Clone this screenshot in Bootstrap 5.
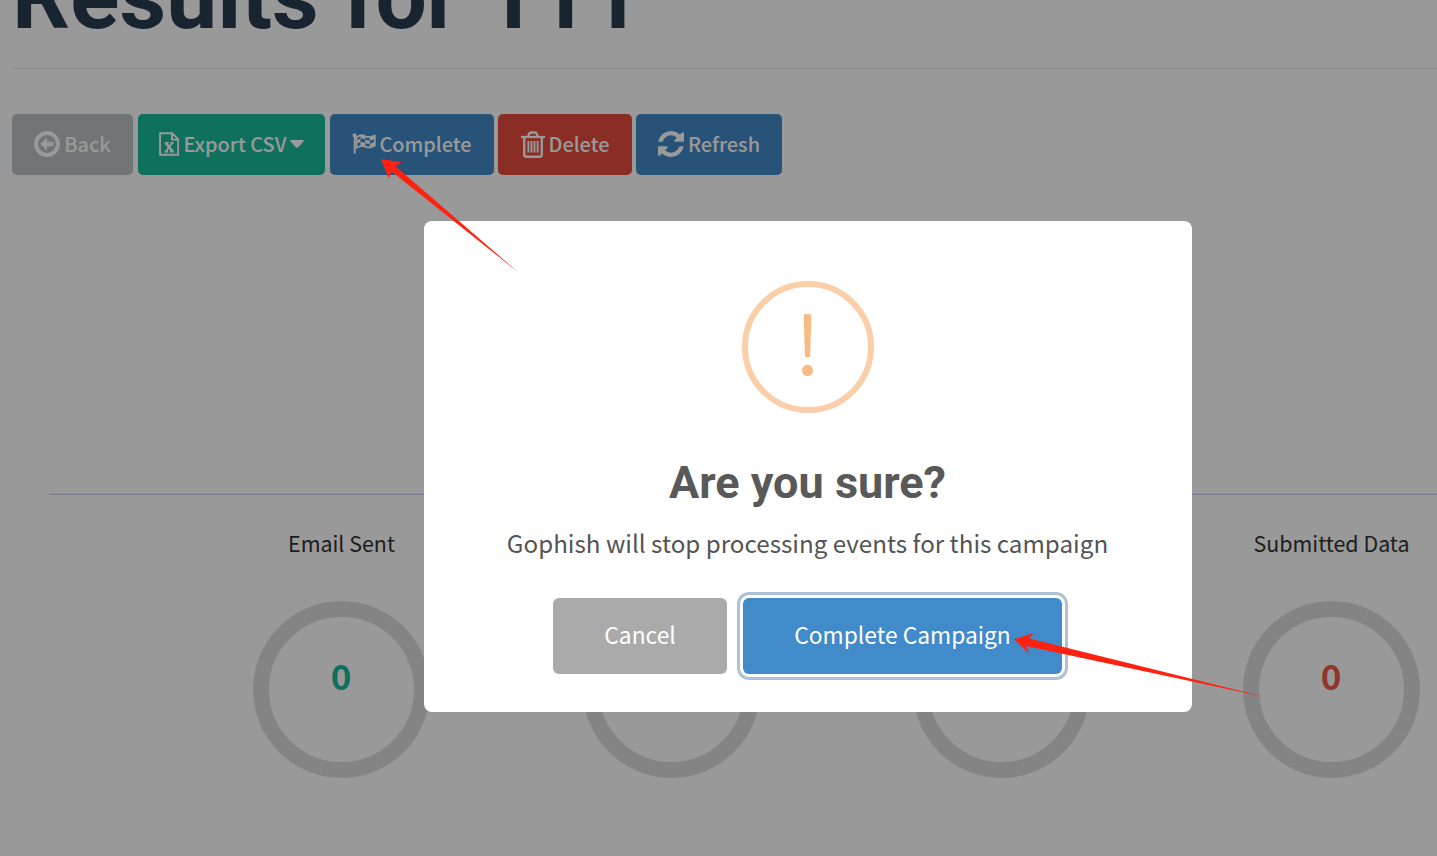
<!doctype html>
<html lang="en">
<head>
    <meta charset="utf-8">
    <meta name="viewport" content="width=device-width, initial-scale=1">
    <title>Results for 111 - Gophish</title>
    <link href="https://cdn.jsdelivr.net/npm/bootstrap@5.3.3/dist/css/bootstrap.min.css" rel="stylesheet">
    <style>
        body {
            font-family: "Noto Sans CJK SC", "Open Sans", sans-serif;
            color: #333;
            background-color: #fff;
            overflow: hidden;
        }
        .page-title {
            font-family: Roboto, sans-serif;
            font-weight: 700;
            font-size: 91px;
            line-height: 100px;
            word-spacing: 1.5px;
            color: #283f50;
            margin: -53px 0 21px;
            white-space: pre;
        }
        .title-rule {
            height: 1px;
            background-color: #e6e6e6;
            margin-bottom: 45px;
        }
        .tool-btn {
            height: 61px;
            padding: 0 0 1px;
            border: 0;
            border-radius: 5px;
            color: #fff;
            font-size: 19.9px;
            font-weight: 500;
            line-height: 60px;
        }
        .tool-btn svg { flex: none; }
        .tool-btn span { margin-top: -1px; }
        .btn-back { background-color: #bdc3c7; width: 121px; }
        .btn-export { background-color: #1abc9c; width: 187px; }
        .btn-complete { background-color: #428bca; width: 164px; }
        .btn-delete { background-color: #e74c3c; width: 134px; }
        .btn-refresh { background-color: #428bca; width: 146px; }
        .timeline {
            height: 320px;
            margin-left: 37px;
            border-bottom: 1px solid #c8cfe6;
            box-shadow: inset 0 -1px 0 #eaedf6;
        }
        .stats {
            width: 1320px;
            margin-left: 164px;
            padding-top: 34px;
        }
        .stat-label {
            height: 30px;
            font-size: 21.4px;
            line-height: 28px;
            margin-bottom: 42px;
            padding-left: 1px;
        }
        .ring {
            width: 177px;
            height: 177px;
            border: 16px solid #ddd;
            border-radius: 50%;
            font-size: 35px;
            font-weight: 700;
            line-height: 40px;
            padding-bottom: 30px;
        }
        .shade {
            background-color: rgba(0, 0, 0, .4);
            padding: 77px 0 0 179px;
        }
        .alert-box {
            width: 768px;
            height: 491px;
            border-radius: 8px;
            padding-top: 60px;
            background-color: #fff;
        }
        .warn-icon {
            width: 132px;
            height: 132px;
            border: 6px solid #facea8;
            border-radius: 50%;
            color: #f8bb86;
            font-size: 81px;
            line-height: 105px;
            padding-right: 1px;
        }
        .alert-title {
            font-family: Roboto, sans-serif;
            font-size: 45px;
            font-weight: 700;
            line-height: 54px;
            color: #595959;
            margin: 43px 1px 15px 0;
        }
        .alert-text {
            font-size: 24.2px;
            line-height: 36px;
            color: #545454;
            margin: 0 1px 37px 0;
        }
        .alert-btn {
            height: 76px;
            border: 0;
            border-radius: 6px;
            padding: 0 0 2px;
            color: #fff;
            font-size: 22.8px;
        }
        .btn-cancel { width: 174px; background-color: #aaa; }
        .btn-confirm {
            width: 319px;
            background-color: #428bca;
            box-shadow: 0 0 0 3px #fff, 0 0 0 6px #adc2d7;
        }
    </style>
</head>
<body>
    <div class="position-relative vh-100 overflow-hidden">
        <main class="d-flex flex-column ps-2 ms-1">
            <h1 class="page-title">Results for 111</h1>
            <div class="title-rule"></div>

            <!-- Campaign actions -->
            <div class="d-flex">
                <button class="btn tool-btn btn-back d-flex align-items-center justify-content-center" style="margin-right: 5px">
                    <svg width="26" height="26" viewBox="0 0 26 26" fill="none" class="me-1">
                        <circle cx="13" cy="13" r="11" stroke="#fff" stroke-width="4"/>
                        <path d="M6.800 13l5.700-5.700v3.900h6.500v3.600h-6.500v3.900z" fill="#fff" stroke="#fff" stroke-width="1" stroke-linejoin="round"/>
                    </svg>
                    <span>Back</span>
                </button>
                <button class="btn tool-btn btn-export d-flex align-items-center justify-content-center" style="margin-right: 5px">
                    <svg width="20" height="24" viewBox="0 0 20.500 24" fill="none" stroke="#fff" class="me-1">
                        <path d="M1.100 1h12.400l6.200 6.200V23H1.100z" stroke-width="2" stroke-linejoin="round"/>
                        <path d="M13.300 1v6.500h6.400" stroke-width="2"/>
                        <path d="M7.200 11l6.600 8.500" stroke-width="2.900"/>
                        <path d="M13.600 11l-6.400 8.500M5.800 10.700h4M11.600 10.700h3.700M5.600 19.800h3.800M11.300 19.800h4" stroke-width="1.700"/>
                    </svg>
                    <span>Export CSV</span>
                    <svg width="14" height="8" viewBox="0 0 14 8" style="margin-left: 3px; margin-top: -1px"><path d="M1 0h12q1.500.3.5 1.600L8 7.500q-1 .8-2 0L.5 1.600Q-.5.3 1 0z" fill="#fff"/></svg>
                </button>
                <button class="btn tool-btn btn-complete d-flex align-items-center justify-content-center" style="margin-right: 4px">
                    <svg width="24" height="22" viewBox="0 0 24 22" fill="none" style="margin: -1px 3px 0 0">
                        <circle cx="2.500" cy="2.200" r="1.900" fill="#fff"/>
                        <path d="M2.700 2v18.500" stroke="#fff" stroke-width="2"/>
                        <path d="M4.500 4.200C7.500 2.300 10 1.200 13 3.200s5.800 1 9.800-.7v10.300c-3.800 1.900-6.800 2.500-9.800.7s-5.500-.5-8.500 1.300z" stroke="#fff" stroke-width="1.800" stroke-linejoin="round"/>
                        <path d="M8.500 2.300q2.500-.7 4.700.8v3.400q-2.200-1.400-4.700-.8zM4.500 7.800q2-1.600 4-2.100v3.400Q6.200 9.600 4.500 11zM13.200 6.500q2.200 1.200 4.600.8v3.400q-2.400.4-4.600-.8zM17.800 4.200q2.200-.5 4.700-1.700v3.400q-2.500 1.200-4.700 1.500zM8.500 9.100q2.500-.5 4.700.8v3.500q-2.200-1.300-4.700-.8zM17.800 10.700q2.200-.5 4.700-1.600v3.500q-2.500 1.200-4.700 1.600z" fill="#fff"/>
                    </svg>
                    <span>Complete</span>
                </button>
                <button class="btn tool-btn btn-delete d-flex align-items-center justify-content-center" style="margin-right: 4px">
                    <svg width="24" height="27" viewBox="0 0 24 27" fill="none" stroke="#fff" class="me-1">
                        <path d="M0 6h24" stroke-width="2.200"/>
                        <path d="M7 5.800l1.200-3Q8.700 1.500 10 1.500h4q1.300 0 1.800 1.300l1.200 3" stroke-width="2.300"/>
                        <path d="M3.200 6v17.500q0 2.300 2.200 2.300h13.200q2.200 0 2.200-2.300V6" stroke-width="2.400"/>
                        <path d="M7.400 10v11.500M10.500 10v11.500M13.500 10v11.500M16.600 10v11.500" stroke-width="1.900"/>
                    </svg>
                    <span>Delete</span>
                </button>
                <button class="btn tool-btn btn-refresh d-flex align-items-center justify-content-center">
                    <svg width="26" height="26" viewBox="128 128 1536 1536" fill="#fff" class="me-1">
                        <path d="M1639 1056q0 5-1 7-64 268-268 434.500t-478 166.500q-146 0-282.500-55t-243.500-157l-129 129q-19 19-45 19t-45-19-19-45v-448q0-26 19-45t45-19h448q26 0 45 19t19 45-19 45l-137 137q71 66 161 102t187 36q134 0 250-65t186-179q11-17 53-117 8-23 30-23h192q13 0 22.500 9.500t9.500 22.500zm25-800v448q0 26-19 45t-45 19h-448q-26 0-45-19t-19-45 19-45l138-138q-148-137-349-137-134 0-250 65t-186 179q-11 17-53 117-8 23-30 23h-199q-13 0-22.500-9.500t-9.500-22.500v-7q65-268 270-434.500t480-166.500q146 0 284 55.500t245 156.500l130-129q19-19 45-19t45 19 19 45z"/>
                    </svg>
                    <span>Refresh</span>
                </button>
            </div>

            <!-- Timeline chart, only the axis line is in view -->
            <div class="timeline"></div>

            <!-- Campaign stats -->
            <div class="stats row g-0 text-center">
                <div class="col-3 d-flex flex-column align-items-center">
                    <div class="stat-label">Email Sent</div>
                    <div class="ring d-flex align-items-center justify-content-center" style="color: #1abc9c">0</div>
                </div>
                <div class="col-3 d-flex flex-column align-items-center">
                    <div class="stat-label"></div>
                    <div class="ring"></div>
                </div>
                <div class="col-3 d-flex flex-column align-items-center">
                    <div class="stat-label"></div>
                    <div class="ring"></div>
                </div>
                <div class="col-3 d-flex flex-column align-items-center">
                    <div class="stat-label">Submitted Data</div>
                    <div class="ring d-flex align-items-center justify-content-center" style="color: #f05b4f">0</div>
                </div>
            </div>
        </main>

        <!-- Confirmation dialog -->
        <div class="shade position-absolute top-0 start-0 w-100 h-100 d-flex align-items-center justify-content-center">
            <div class="alert-box d-flex flex-column align-items-center" role="dialog">
                <div class="warn-icon text-center">!</div>
                <h2 class="alert-title">Are you sure?</h2>
                <div class="alert-text">Gophish will stop processing events for this campaign</div>
                <div class="d-flex gap-3 me-1" style="padding-left: 3px">
                    <button class="btn alert-btn btn-cancel">Cancel</button>
                    <button class="btn alert-btn btn-confirm">Complete Campaign</button>
                </div>
            </div>
        </div>

        <!-- Pointer arrows -->
        <svg class="position-absolute top-0 start-0 pe-none" width="1437" height="856" fill="#ff2211">
            <path d="M381 159l20.500 3.300-6 4L518.500 272.500 391.500 171.500l-2.700 7z"/>
            <path d="M1014 639.300l19.500-6.300-4.200 5.500L1267 697.500 1026 646l3 7.200z"/>
        </svg>
    </div>
    <script src="https://cdn.jsdelivr.net/npm/bootstrap@5.3.3/dist/js/bootstrap.bundle.min.js"></script>
</body>
</html>
